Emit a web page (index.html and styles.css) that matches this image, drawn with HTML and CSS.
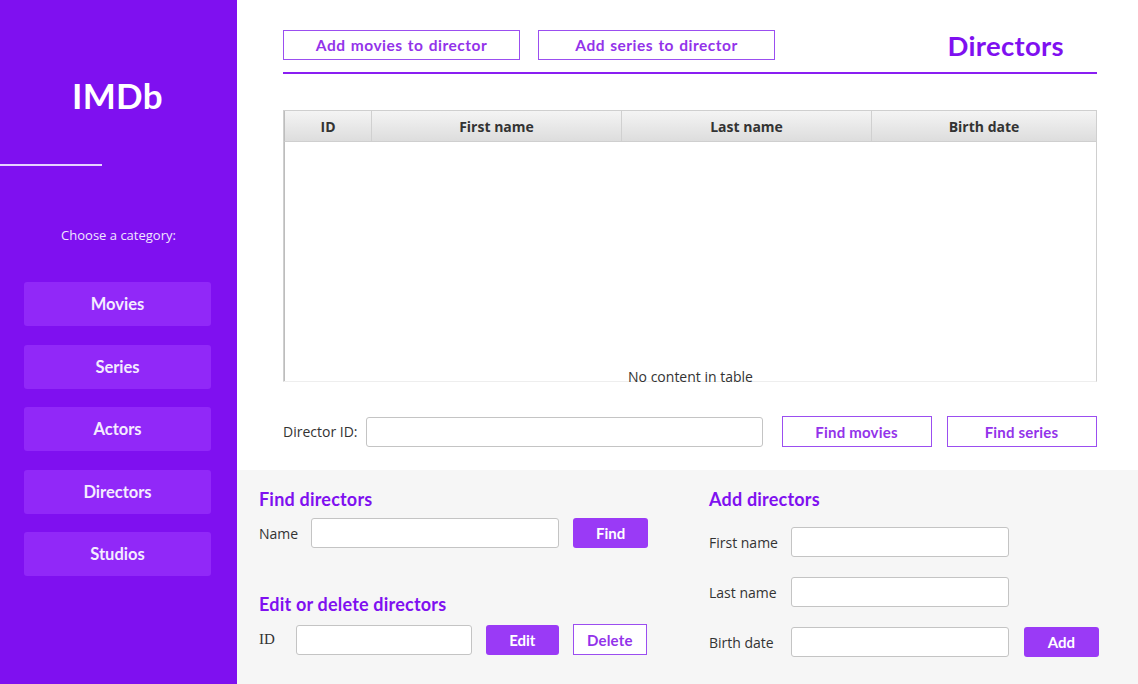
FILE: index.html
```html
<!DOCTYPE html>
<html>
<head>
<meta charset="utf-8">
<link rel="stylesheet" href="styles.css">
</head>
<body>
<div class="app">
  <aside class="sidebar">
    <div class="logo">IMDb</div>
    <div class="logo-rule"></div>
    <div class="choose">Choose a category:</div>
    <nav class="nav">
      <div class="nav-btn">Movies</div>
      <div class="nav-btn">Series</div>
      <div class="nav-btn">Actors</div>
      <div class="nav-btn">Directors</div>
      <div class="nav-btn">Studios</div>
    </nav>
  </aside>
  <main class="main">
    <section class="top">
      <div class="topbar">
        <div class="btn-outline wide">Add movies to director</div>
        <div class="btn-outline wide">Add series to director</div>
        <h1 class="title">Directors</h1>
      </div>
      <div class="table">
        <div class="thead">
          <div class="th c-id">ID</div>
          <div class="th c-fn">First name</div>
          <div class="th c-ln">Last name</div>
          <div class="th c-bd">Birth date</div>
        </div>
        <div class="tbody">
          <div class="empty">No content in table</div>
        </div>
      </div>
      <div class="idrow">
        <span class="label">Director ID:</span>
        <div class="input id-input"></div>
        <div class="btn-outline mid">Find movies</div>
        <div class="btn-outline mid">Find series</div>
      </div>
    </section>
    <section class="bottom">
      <div class="col-left">
        <h2 class="sub">Find directors</h2>
        <div class="row r-find">
          <span class="label">Name</span>
          <div class="input name-input"></div>
          <div class="btn-fill">Find</div>
        </div>
        <h2 class="sub sub2">Edit or delete directors</h2>
        <div class="row r-edit">
          <span class="label serif">ID</span>
          <div class="input edit-input"></div>
          <div class="btn-fill edit">Edit</div>
          <div class="btn-outline small">Delete</div>
        </div>
      </div>
      <div class="col-right">
        <h2 class="sub">Add directors</h2>
        <div class="form">
          <span class="label">First name</span>
          <div class="input add-input"></div>
          <span></span>
          <span class="label">Last name</span>
          <div class="input add-input"></div>
          <span></span>
          <span class="label">Birth date</span>
          <div class="input add-input"></div>
          <div class="btn-fill">Add</div>
        </div>
      </div>
    </section>
  </main>
</div>
</body>
</html>
```

FILE: styles.css
```css
* { box-sizing: border-box; }
html, body { margin: 0; padding: 0; }
body {
  width: 1138px;
  height: 684px;
  overflow: hidden;
  font-family: "Open Sans", "Noto Sans", sans-serif;
  background: #ffffff;
}
.app { display: flex; height: 684px; }

.sidebar {
  width: 237px;
  flex: none;
  background: #7f10f0;
  display: flex;
  flex-direction: column;
  color: #fff;
}
.logo {
  font-family: "Lato", sans-serif;
  font-weight: 700;
  font-size: 35px;
  text-align: center;
  margin-top: 73px;
  line-height: 44px;
  letter-spacing: 0.3px;
  padding-right: 2px;
}
.logo-rule {
  width: 102px;
  height: 2px;
  background: #e6d2ff;
  margin-top: 47px;
}
.choose {
  font-size: 13px;
  text-align: center;
  margin-top: 60px;
  line-height: 18px;
  color: #f1e6ff;
}
.nav {
  display: flex;
  flex-direction: column;
  gap: 18.5px;
  padding: 0 26px 0 24px;
  margin-top: 38px;
}
.nav-btn {
  height: 44px;
  background: #9128f8;
  border-radius: 3px;
  display: flex;
  align-items: center;
  justify-content: center;
  font-family: "Lato", sans-serif;
  font-weight: 700;
  font-size: 16.5px;
  color: #f4ecff;
}

.main { flex: 1; display: flex; flex-direction: column; }
.top {
  height: 470px;
  padding: 30px 41px 0 46px;
}
.topbar {
  display: flex;
  align-items: flex-start;
  gap: 18px;
  height: 44px;
  border-bottom: 2px solid #8a1ef2;
}
.btn-outline {
  border: 1.5px solid #9b4ef0;
  color: #9333ea;
  display: flex;
  align-items: center;
  justify-content: center;
  font-family: "Lato", sans-serif;
  font-weight: 700;
  font-size: 15px;
  background: #fff;
  letter-spacing: 0.2px;
}
.btn-outline.wide { width: 237px; height: 30px; font-size: 15.5px; letter-spacing: 0.5px; word-spacing: 1px; }
.title {
  margin: 0 33px 0 auto;
  font-family: "Lato", sans-serif;
  font-weight: 700;
  font-size: 27.5px;
  color: #7f10f0;
  line-height: 32px;
  letter-spacing: 0.3px;
}

.table {
  margin-top: 36px;
  height: 272px;
  border: 1px solid #cfcfcf;
  border-bottom: 1px solid #eeeeee;
  display: flex;
  flex-direction: column;
}
.thead {
  display: flex;
  height: 31px;
  background: linear-gradient(#f4f4f4, #dddddd);
  border-bottom: 1px solid #cfcfcf;
  border-left: 1px solid #bdbdbd;
}
.th {
  display: flex;
  align-items: center;
  justify-content: center;
  font-weight: 700;
  font-size: 14px;
  color: #333;
  border-right: 1px solid #d0d0d0;
}
.c-id { width: 87px; }
.c-fn { width: 250px; }
.c-ln { width: 250px; }
.c-bd { flex: 1; border-right: 0; }
.tbody {
  flex: 1;
  position: relative;
  border-left: 1px solid #bdbdbd;
}
.empty {
  position: absolute;
  left: 0; right: 0;
  bottom: -5px;
  text-align: center;
  font-size: 14px;
  color: #333;
}

.idrow {
  display: flex;
  align-items: center;
  margin-top: 34px;
  height: 31px;
}
.label {
  font-size: 14px;
  color: #333;
  white-space: nowrap;
}
.label.serif { font-family: "Liberation Serif", serif; font-size: 15px; }
.input {
  height: 30px;
  background: #fff;
  border: 1px solid #c4c4c4;
  border-radius: 3px;
}
.id-input { width: 397px; margin-left: 8px; margin-right: 19px; }
.btn-outline.mid { width: 150px; height: 31px; }
.idrow .btn-outline.mid + .btn-outline.mid { margin-left: 15px; }

.bottom {
  flex: 1;
  background: #f6f6f6;
  display: flex;
  padding: 17px 0 0 22px;
}
.col-left { width: 450px; }
.sub {
  margin: 0;
  font-family: "Lato", sans-serif;
  font-weight: 700;
  font-size: 18px;
  line-height: 24px;
  color: #7f10f0;
  letter-spacing: 0.2px;
}
.row { display: flex; align-items: center; }
.r-find { margin-top: 7px; }
.name-input { width: 248px; margin-left: 13px; margin-right: 14px; }
.btn-fill {
  width: 75px;
  height: 30px;
  border-radius: 3px;
  background: #9a3af6;
  color: #fff;
  display: flex;
  align-items: center;
  justify-content: center;
  font-family: "Lato", sans-serif;
  font-weight: 700;
  font-size: 15px;
}
.sub2 { margin-top: 44px; }
.r-edit { margin-top: 8px; }
.edit-input { width: 176px; margin-left: 21px; margin-right: 14px; }
.btn-fill.edit { width: 73px; }
.btn-outline.small { width: 74px; height: 31px; margin-left: 14px; }

.form {
  margin-top: 16px;
  display: grid;
  grid-template-columns: 82px 218px 90px;
  grid-auto-rows: 30px;
  row-gap: 20px;
  align-items: center;
}
.add-input { width: 218px; }
.form .btn-fill { margin-left: 15px; }
```
